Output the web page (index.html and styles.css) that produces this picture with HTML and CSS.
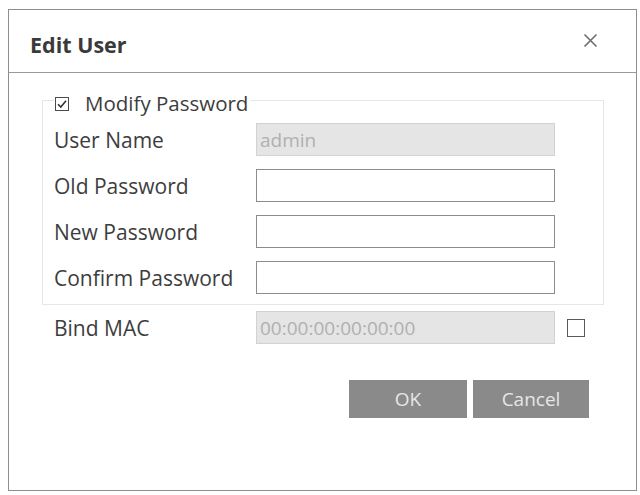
FILE: index.html
```html
<!DOCTYPE html>
<html>
<head>
<meta charset="utf-8">
<title>Edit User</title>
<link rel="stylesheet" href="styles.css">
</head>
<body>
<div class="dialog">
  <div class="header">
    <h1 class="title">Edit User</h1>
    <span class="close" aria-label="Close">
      <svg width="15" height="15" viewBox="0 0 15 15"><path d="M1.5 1.5 L13.5 13.5 M13.5 1.5 L1.5 13.5" stroke="#6e6e6e" stroke-width="1.6" fill="none"/></svg>
    </span>
  </div>
  <div class="body">
    <fieldset class="group">
      <legend class="legend">
        <span class="cb">
          <svg width="14" height="14" viewBox="0 0 14 14"><rect x="0.5" y="0.5" width="13" height="13" fill="#fff" stroke="#4a4a4a"/><path d="M3 7.2 L5.8 10 L11 3.8" stroke="#333" stroke-width="1.6" fill="none"/></svg>
        </span>Modify Password
      </legend>
      <div class="row"><span class="label">User Name</span><input class="field" type="text" value="admin" disabled></div>
      <div class="row"><span class="label">Old Password</span><input class="field" type="password"></div>
      <div class="row"><span class="label">New Password</span><input class="field" type="password"></div>
      <div class="row"><span class="label">Confirm Password</span><input class="field" type="password"></div>
    </fieldset>
    <div class="row mac-row">
      <span class="label">Bind MAC</span><input class="field" type="text" value="00:00:00:00:00:00" disabled>
      <span class="cb-mac"></span>
    </div>
    <div class="actions">
      <button class="btn btn-ok">OK</button>
      <button class="btn btn-cancel">Cancel</button>
    </div>
  </div>
</div>
</body>
</html>
```

FILE: styles.css
```css
* { box-sizing: border-box; }
html, body { margin: 0; padding: 0; background: #fff; }
body {
  font-family: "Open Sans", "Noto Sans", "Liberation Sans", sans-serif;
  color: #3d3d3d;
}
.dialog {
  margin: 9px 0 0 8px;
  width: 629px;
  height: 482px;
  border: 1px solid #8e8e8e;
  background: #fff;
}
.header {
  height: 63px;
  border-bottom: 1px solid #9a9a9a;
  display: flex;
  justify-content: space-between;
  align-items: flex-start;
  padding: 23px 38px 0 21px;
}
.title {
  margin: 0;
  font-size: 21.5px;
  line-height: 24px;
  font-weight: 700;
  color: #3a3a3a;
}
.close {
  display: block;
  width: 15px;
  height: 15px;
  margin-top: 0;
}
.close svg { display: block; }
.body {
  padding: 12px 32px 0 33px;
}
.group {
  margin: 0;
  border: 1px solid #e6e6e6;
  padding: 8px 10px 10px 11px;
}
.legend {
  padding: 6px 2px 0 1px;
  font-size: 20.5px;
  line-height: 24px;
  color: #3d3d3d;
  display: flex;
  align-items: center;
}
.cb {
  display: block;
  width: 14px;
  height: 14px;
  margin-right: 16px;
  margin-top: 1px;
}
.cb svg { display: block; }
.row {
  display: flex;
  align-items: center;
  height: 33px;
}
.row + .row { margin-top: 13px; }
.label {
  width: 202px;
  font-size: 21px;
  line-height: 24px;
  color: #3d3d3d;
  white-space: nowrap;
}
.field {
  -webkit-appearance: none;
  appearance: none;
  width: 299px;
  height: 33px;
  margin: 0;
  border: 1px solid #8c8c8c;
  background: #fff;
  padding: 0 3px;
  font-family: "Open Sans", "Noto Sans", "Liberation Sans", sans-serif;
  font-size: 19px;
  color: #3d3d3d;
  outline: none;
}
.field:disabled {
  background: #e5e5e5;
  border-color: #d2d2d2;
  color: #b0b0b0;
}
.mac-row {
  margin-top: 6px;
  padding-left: 12px;
}
.cb-mac {
  display: block;
  width: 18px;
  height: 18px;
  margin-left: 12px;
  border: 1px solid #5a5a5a;
  background: #fff;
}
.actions {
  display: flex;
  justify-content: flex-end;
  gap: 6px;
  margin-top: 36px;
  padding-right: 15px;
}
.btn {
  height: 38px;
  border: none;
  background: #8a8a8a;
  color: #e6e6e6;
  font-family: "Open Sans", "Noto Sans", "Liberation Sans", sans-serif;
  font-size: 19px;
  padding: 0;
  cursor: pointer;
}
.btn-ok { width: 118px; }
.btn-cancel { width: 116px; }
```
